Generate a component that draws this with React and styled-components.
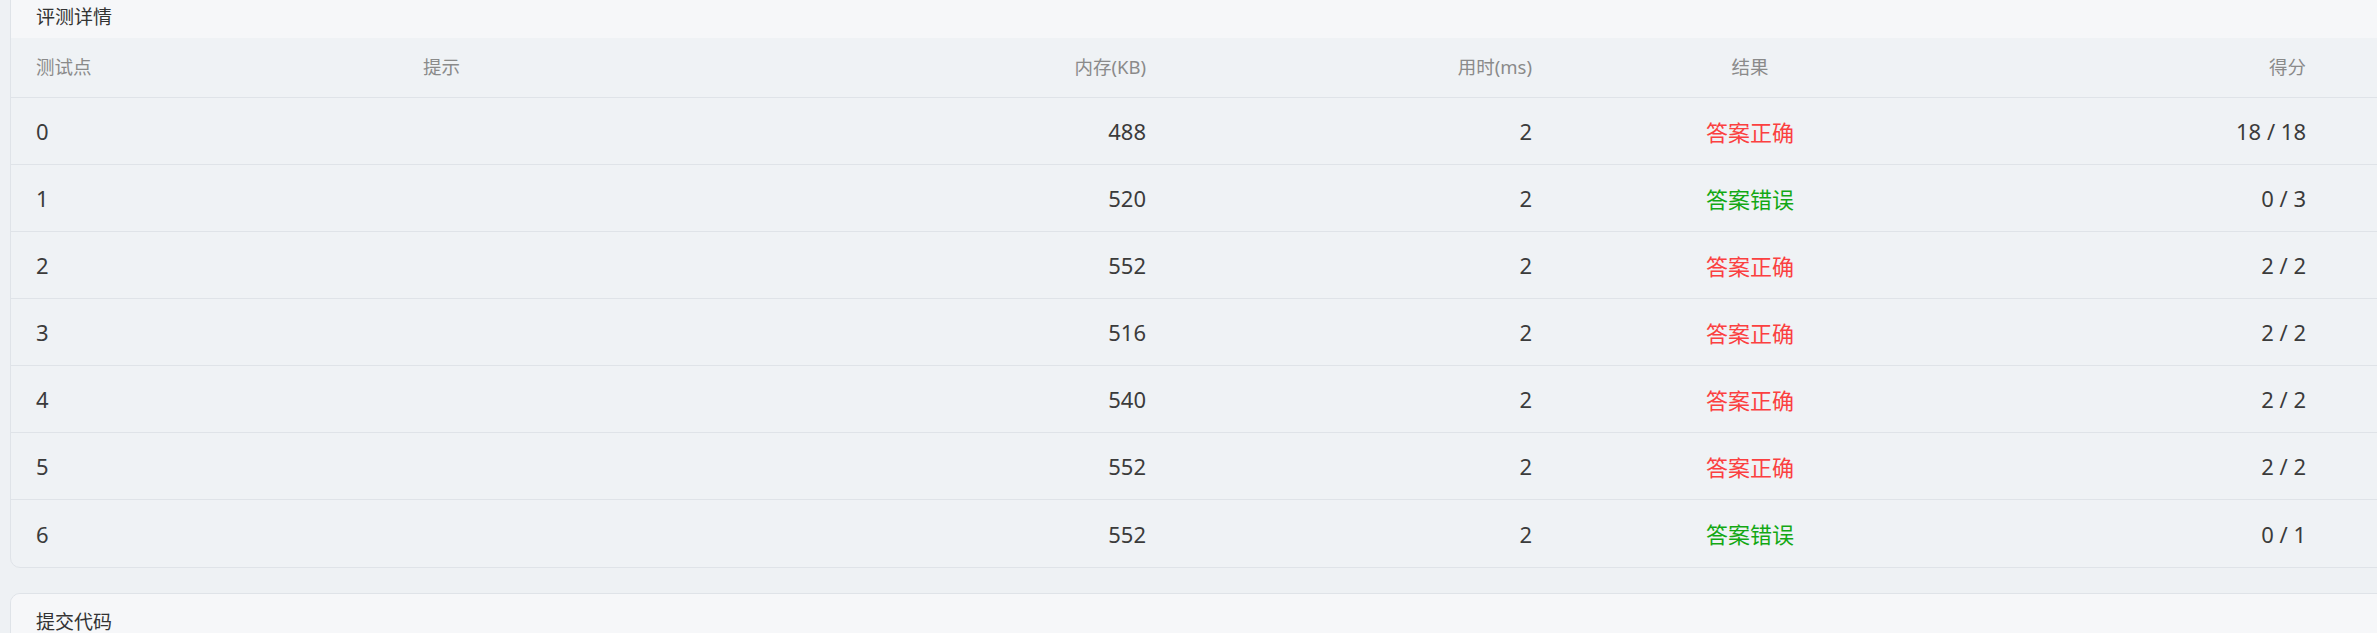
import React from "react";
import styled, { createGlobalStyle } from "styled-components";

const Global = createGlobalStyle`
  html, body { margin: 0; padding: 0; background: #eef1f4; overflow: hidden; }
  body { font-family: "Noto Sans", "Noto Sans CJK SC", sans-serif; }
`;

const Page = styled.div`
  width: 2377px;
  height: 633px;
  overflow: hidden;
  padding: 0 0 0 10px;
  box-sizing: border-box;
`;

const Stack = styled.div`
  margin-top: -12px;
  margin-right: -14px;
  display: flex;
  flex-direction: column;
  gap: 25px;
`;

const Card = styled.section`
  background: #eff2f5;
  border: 1px solid #dfe3e8;
  border-radius: 10px;
  overflow: hidden;
`;

const CardHeader = styled.div`
  background: #f6f7f9;
  padding: 17px 25px 12px;
  font-size: 19px;
  line-height: 20px;
  color: #333;
  font-family: "Noto Sans CJK SC", sans-serif;
`;

const Row = styled.div`
  display: grid;
  grid-template-columns: 387px 347px 376px 386px 436px 338px;
  align-items: center;
  height: ${(p) => p.$h}px;
  padding: 0 0 0 25px;
  box-sizing: border-box;
  border-bottom: ${(p) => (p.$last ? "none" : "1px solid #dfe3e8")};
  font-size: ${(p) => (p.$head ? "18.5px" : "22px")};
  color: ${(p) => (p.$head ? "#8a8a8a" : "#3b3b3b")};
`;

const Cell = styled.div`
  text-align: ${(p) => p.$align || "left"};
  white-space: nowrap;
  line-height: 1;
`;

const Status = styled.span`
  font-family: "Noto Sans CJK SC", sans-serif;
  color: ${(p) => (p.$ok ? "#fb4040" : "#13a814")};
`;

const rows = [
  [0, 488, 2, true, "18 / 18"],
  [1, 520, 2, false, "0 / 3"],
  [2, 552, 2, true, "2 / 2"],
  [3, 516, 2, true, "2 / 2"],
  [4, 540, 2, true, "2 / 2"],
  [5, 552, 2, true, "2 / 2"],
  [6, 552, 2, false, "0 / 1"],
];

export default function App() {
  return (
    <Page>
      <Global />
      <Stack>
        <Card>
          <CardHeader>评测详情</CardHeader>
          <Row $head $h={60}>
            <Cell>测试点</Cell>
            <Cell>提示</Cell>
            <Cell $align="right">内存(KB)</Cell>
            <Cell $align="right">用时(ms)</Cell>
            <Cell $align="center">结果</Cell>
            <Cell $align="right">得分</Cell>
          </Row>
          {rows.map(([id, mem, time, ok, score], i) => (
            <Row key={id} $h={67} $last={i === rows.length - 1}>
              <Cell>{id}</Cell>
              <Cell></Cell>
              <Cell $align="right">{mem}</Cell>
              <Cell $align="right">{time}</Cell>
              <Cell $align="center">
                <Status $ok={ok}>{ok ? "答案正确" : "答案错误"}</Status>
              </Cell>
              <Cell $align="right">{score}</Cell>
            </Row>
          ))}
        </Card>
        <Card>
          <CardHeader>提交代码</CardHeader>
        </Card>
      </Stack>
    </Page>
  );
}
